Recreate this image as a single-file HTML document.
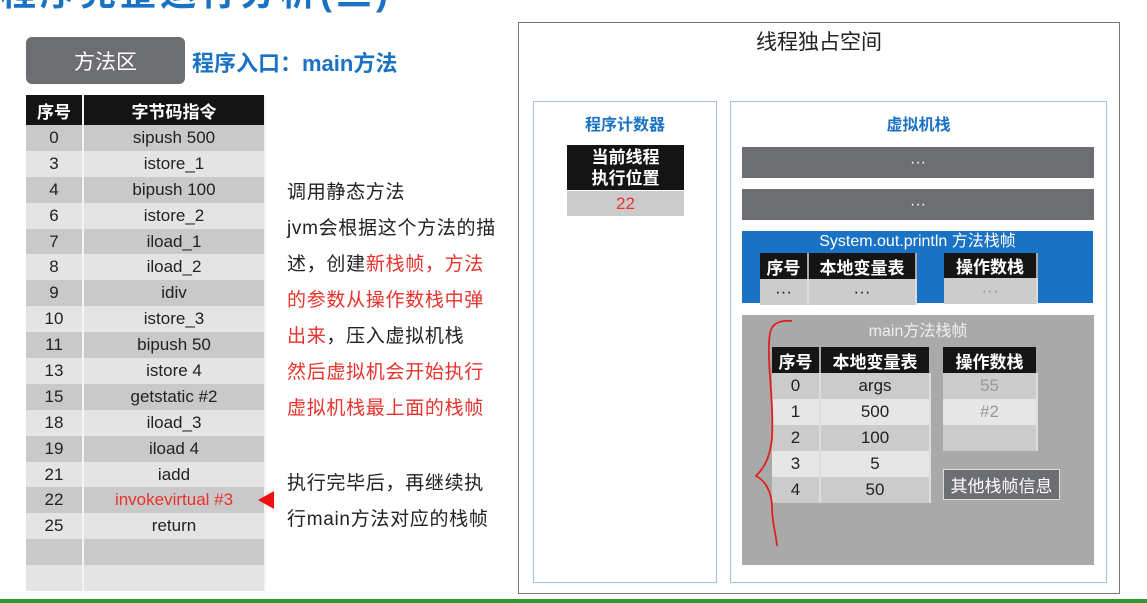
<!DOCTYPE html>
<html><head><meta charset="utf-8"><style>
*{margin:0;padding:0;box-sizing:border-box}
body{width:1147px;height:603px;background:#fff;position:relative;overflow:hidden;font-family:"Liberation Sans","Noto Sans CJK SC",sans-serif;color:#222}
.a{position:absolute}
.t{position:absolute;left:26px;top:95px;width:240px;border-collapse:collapse;font-size:17px;text-align:center}
.t td,.t th{height:25.9px;padding:0;border-right:2px solid #f4f4f4}
.t th{background:#141414;color:#fff;height:30px;font-weight:bold}
.t tr:nth-child(even) td{background:#c9c9c9}
.t tr:nth-child(odd) td{background:#e4e4e4}
.c{display:flex;align-items:center;justify-content:center}
.mt{border-collapse:collapse;font-size:17px;text-align:center;position:absolute}
.mt th{background:#151515;color:#fff;font-weight:bold;height:26px;border-right:2px solid #aaa}
.mt td{height:26px;border-right:2px solid #ddd}
.mt tr:nth-child(even) td{background:#cbcbcb}
.mt tr:nth-child(odd) td{background:#e6e6e6}
.txt{position:absolute;left:287px;font-size:19px;letter-spacing:0.7px;line-height:36px;color:#222}
.r{color:#e8322c}
</style></head><body>
<div class="a" style="left:0;top:-36px;font-size:36px;font-weight:bold;color:#1a72c4;letter-spacing:4px">程序完整运行分析(三)</div>
<div class="a c" style="left:26px;top:37px;width:159px;height:47px;background:#6d6e72;border-radius:6px;color:#fff;font-size:21px">方法区</div>
<div class="a" style="left:192px;top:46px;font-size:22px;color:#1a72c4;font-weight:bold">程序入口：main方法</div>
<table class="t">
<tr><th style="width:57px">序号</th><th>字节码指令</th></tr>
<tr><td>0</td><td>sipush 500</td></tr>
<tr><td>3</td><td>istore_1</td></tr>
<tr><td>4</td><td>bipush 100</td></tr>
<tr><td>6</td><td>istore_2</td></tr>
<tr><td>7</td><td>iload_1</td></tr>
<tr><td>8</td><td>iload_2</td></tr>
<tr><td>9</td><td>idiv</td></tr>
<tr><td>10</td><td>istore_3</td></tr>
<tr><td>11</td><td>bipush 50</td></tr>
<tr><td>13</td><td>istore 4</td></tr>
<tr><td>15</td><td>getstatic #2</td></tr>
<tr><td>18</td><td>iload_3</td></tr>
<tr><td>19</td><td>iload 4</td></tr>
<tr><td>21</td><td>iadd</td></tr>
<tr><td>22</td><td style="color:#e8322c">invokevirtual #3</td></tr>
<tr><td>25</td><td>return</td></tr>
<tr><td></td><td></td></tr>
<tr><td></td><td></td></tr>
</table>
<div class="a" style="left:258px;top:491px;width:0;height:0;border-top:9px solid transparent;border-bottom:9px solid transparent;border-right:16px solid #f01010"></div>
<div class="txt" style="top:175px">调用静态方法<br>jvm会根据这个方法的描<br>述，创建<span class="r">新栈帧，方法<br>的参数从操作数栈中弹<br>出来</span>，压入虚拟机栈<br><span class="r">然后虚拟机会开始执行<br>虚拟机栈最上面的栈帧</span></div>
<div class="txt" style="top:466px">执行完毕后，再继续执<br>行main方法对应的栈帧</div>

<div class="a" style="left:518px;top:22px;width:602px;height:572px;border:1.5px solid #777"></div>
<div class="a" style="left:518px;top:26px;width:602px;text-align:center;font-size:21px">线程独占空间</div>
<div class="a" style="left:533px;top:101px;width:184px;height:482px;border:1.5px solid #9cc3e6"></div>
<div class="a" style="left:533px;top:111px;width:184px;text-align:center;font-size:16px;color:#1a72c4;font-weight:bold">程序计数器</div>
<div class="a c" style="left:567px;top:145px;width:117px;height:45px;background:#141414;color:#fff;font-size:17px;font-weight:bold;line-height:21px;text-align:center">当前线程<br>执行位置</div>
<div class="a c" style="left:567px;top:191px;width:117px;height:25px;background:#cbcbcb;color:#e8322c;font-size:17px">22</div>
<div class="a" style="left:730px;top:101px;width:377px;height:482px;border:1.5px solid #9cc3e6"></div>
<div class="a" style="left:730px;top:111px;width:377px;text-align:center;font-size:16px;color:#1a72c4;font-weight:bold">虚拟机栈</div>
<div class="a c" style="left:742px;top:147px;width:352px;height:31px;background:#6d6e72;color:#fff">···</div>
<div class="a c" style="left:742px;top:189px;width:352px;height:31px;background:#6d6e72;color:#fff">···</div>
<div class="a" style="left:742px;top:231px;width:351px;height:72px;background:#1a72c4"></div>
<div class="a" style="left:742px;top:232px;width:351px;text-align:center;color:#fff;font-size:16px;line-height:20px">System.out.println 方法栈帧</div>
<table class="mt" style="left:760px;top:253px;width:157px"><tr><th style="width:48px;height:25px">序号</th><th>本地变量表</th></tr><tr><td style="background:#ccc">···</td><td style="background:#ccc">···</td></tr></table>
<table class="mt" style="left:944px;top:253px;width:94px"><tr><th style="height:25px">操作数栈</th></tr><tr><td style="background:#ccc;color:#999">···</td></tr></table>
<div class="a" style="left:742px;top:315px;width:352px;height:250px;background:#a9a9a9"></div>
<div class="a" style="left:742px;top:317px;width:352px;text-align:center;color:#eee;font-size:16px">main方法栈帧</div>
<table class="mt" style="left:772px;top:347px;width:159px">
<tr><th style="width:48px">序号</th><th>本地变量表</th></tr>
<tr><td>0</td><td>args</td></tr><tr><td>1</td><td>500</td></tr><tr><td>2</td><td>100</td></tr><tr><td>3</td><td>5</td></tr><tr><td>4</td><td>50</td></tr></table>
<table class="mt" style="left:943px;top:347px;width:95px">
<tr><th>操作数栈</th></tr><tr><td style="color:#999">55</td></tr><tr><td style="color:#999">#2</td></tr><tr><td></td></tr></table>
<div class="a c" style="left:943px;top:469px;width:117px;height:31px;background:#6d6e72;color:#fff;font-size:17px;border:1.5px solid #ddd">其他栈帧信息</div>
<svg class="a" style="left:750px;top:318px" width="50" height="232"><path d="M42 3 C30 2 22 5 20 15 C16 40 24 80 22 120 C20 140 14 150 6 158 C14 162 22 172 22 190 C22 205 26 215 27 228" fill="none" stroke="#e02020" stroke-width="1.8"/></svg>
<div class="a" style="left:0;top:599px;width:1147px;height:4px;background:#2e9a2e"></div>
</body></html>
